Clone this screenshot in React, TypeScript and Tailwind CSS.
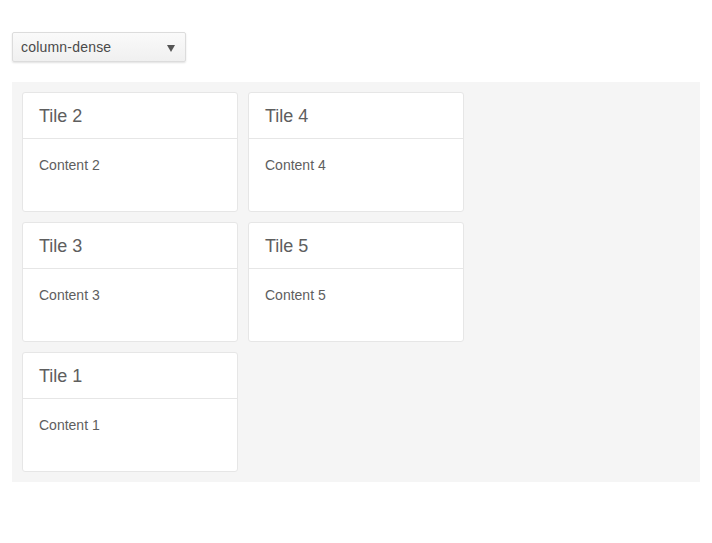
import React from "react";

const tiles = [2, 3, 1, 4, 5];

export default function App() {
  return (
    <div className="min-h-[543px] w-[712px] bg-white px-3 pt-8 text-[#5e5e5e]" style={{ fontFamily: '"Liberation Sans", Arial, sans-serif' }}>
      <div className="relative flex h-[30px] w-[174px] items-center rounded-[2px] border border-[#dcdcdc] bg-gradient-to-b from-[#fafafa] to-[#f0f0f0] pl-2 text-[14px] tracking-[0.2px] text-[#4a4a4a] shadow-[0_1px_2px_rgba(0,0,0,0.12)]">
        <span>column-dense</span>
        <svg className="absolute right-[10px] top-[12px]" width="8" height="7" viewBox="0 0 8 7">
          <path d="M0 0 H8 L4 7 Z" fill="#555" />
        </svg>
      </div>
      <div className="mt-5 grid w-[688px] grid-flow-col grid-cols-[repeat(3,216px)] grid-rows-[repeat(3,120px)] gap-[10px] bg-[#f5f5f5] p-[10px]">
        {tiles.map((n) => (
          <div key={n} className="flex flex-col rounded-[3px] border border-[#e6e6e6] bg-white">
            <div className="flex h-[46px] items-center border-b border-[#e6e6e6] px-4 pt-[2px] text-[18px] text-[#5e5e5e]">Tile {n}</div>
            <div className="px-4 pt-4 text-[14px] text-[#5e5e5e]">Content {n}</div>
          </div>
        ))}
      </div>
    </div>
  );
}
